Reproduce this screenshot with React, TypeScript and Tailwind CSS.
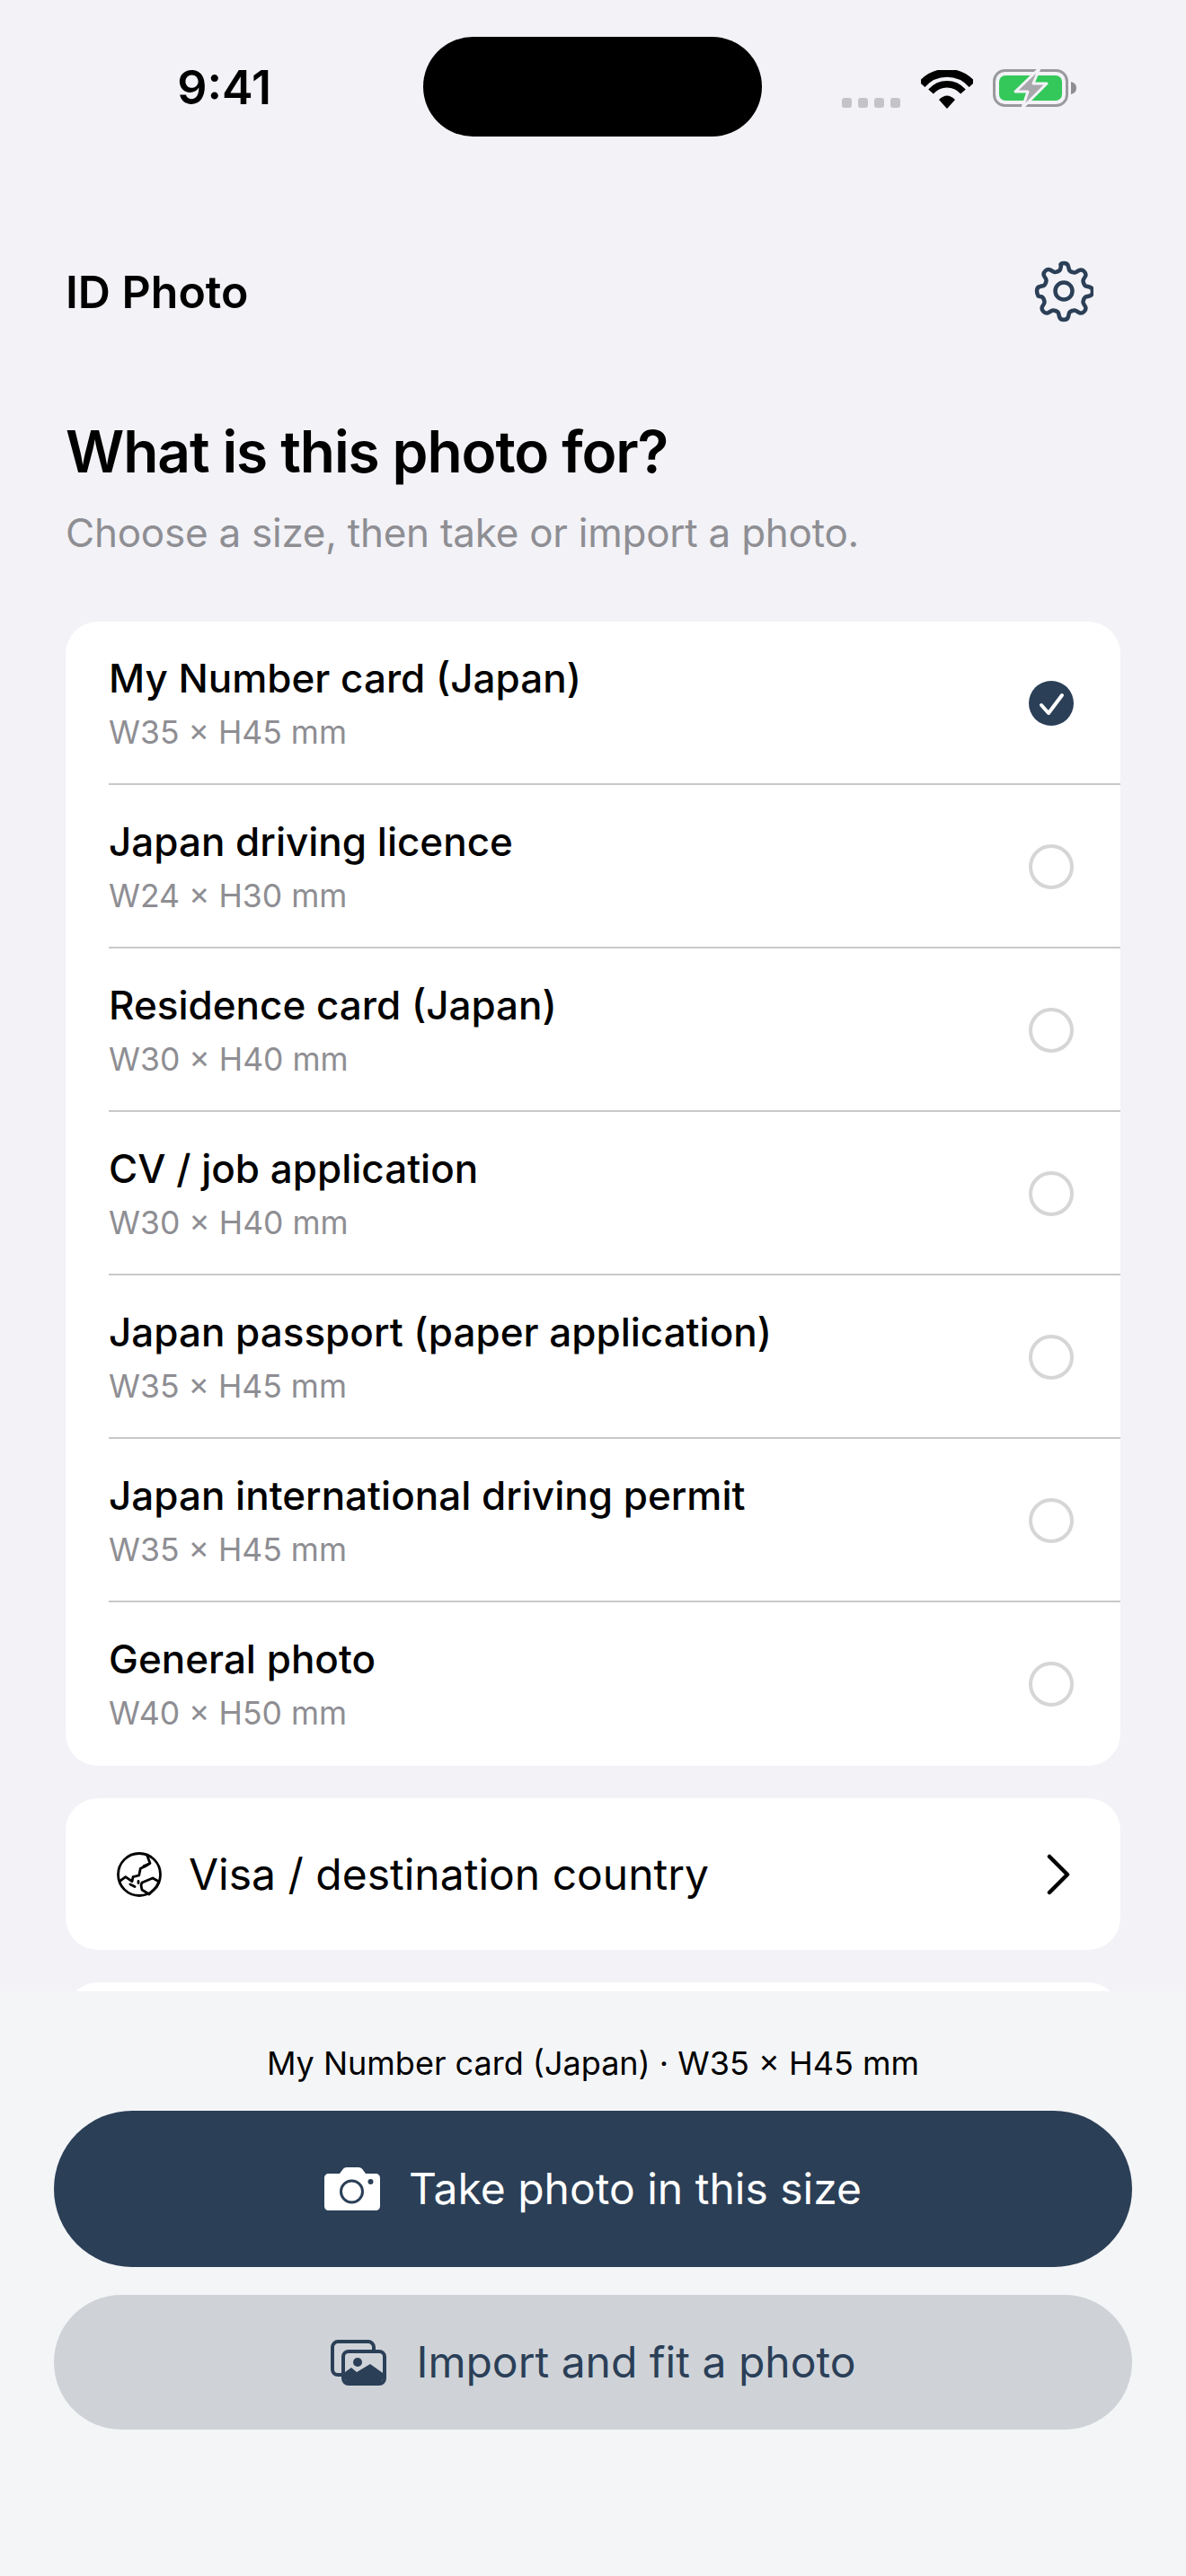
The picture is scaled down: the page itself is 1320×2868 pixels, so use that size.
const sizes = [
  { name: 'My Number card (Japan)', size: 'W35 × H45 mm', on: true },
  { name: 'Japan driving licence', size: 'W24 × H30 mm' },
  { name: 'Residence card (Japan)', size: 'W30 × H40 mm' },
  { name: 'CV / job application', size: 'W30 × H40 mm' },
  { name: 'Japan passport (paper application)', size: 'W35 × H45 mm' },
  { name: 'Japan international driving permit', size: 'W35 × H45 mm' },
  { name: 'General photo', size: 'W40 × H50 mm' },
]

function StatusIcons() {
  return (
    <div className="flex items-end">
      <div className="mb-[1px] flex gap-[7px]">
        <span className="h-[11px] w-[11px] rounded-[3px] bg-[#c4c4c8]" />
        <span className="h-[11px] w-[11px] rounded-[3px] bg-[#c4c4c8]" />
        <span className="h-[11px] w-[11px] rounded-[3px] bg-[#c4c4c8]" />
        <span className="h-[11px] w-[11px] rounded-[3px] bg-[#c4c4c8]" />
      </div>
      <svg className="ml-[23px]" width="58" height="43" viewBox="0 0 58 43" fill="none">
        <path d="M1 14C16-3 42-3 57 14" stroke="#000" strokeWidth="9" transform="translate(0 2)" />
        <path d="M11 24c10-11 26-11 36 0" stroke="#000" strokeWidth="7.5" />
        <path d="M20 33c6-6 12-6 18 0L29 43z" fill="#000" />
      </svg>
      <svg className="ml-[22px]" width="94" height="46" viewBox="0 0 94 46" fill="none">
        <rect x="1.500" y="3.500" width="81" height="39" rx="12" stroke="#9a9a9e" strokeWidth="3" />
        <rect x="7" y="9" width="70" height="28" rx="7" fill="#34c85a" />
        <path d="M87 16c4 1 6 3.500 6 7s-2 6-6 7z" fill="#8e8e92" />
        <path d="M52 1 25 27h14l-6 18 27-27H45z" fill="#a8a8ac" stroke="#f2f2f7" strokeWidth="3" strokeLinejoin="round" />
      </svg>
    </div>
  )
}

function Gear() {
  const d = 'M31 5c2.500 0 4.500 1 5 3.500l1 4c.5 1.500 2 2 3.500 2.500 1.500.5 2.500 1 4 0l3.500-2c2-1 4-.5 5.500 1 1.500 1.500 2.500 3.500 1.500 5.500l-2 3.500c-1 1.500-.5 2.500 0 4s1 3 2.500 3.500l4 1c2.500.5 3.500 2.500 3.500 5s-1 4.500-3.500 5l-4 1c-1.500.5-2 2-2.500 3.500s-1 2.500 0 4l2 3.500c1 2 0 4-1.500 5.500s-3.500 2-5.500 1l-3.500-2c-1.500-1-2.500-.5-4 0s-3 1-3.500 2.500l-1 4c-.5 2.500-2.500 3.500-5 3.500s-4.500-1-5-3.500l-1-4c-.5-1.500-2-2-3.500-2.500s-2.500-1-4 0l-3.500 2c-2 1-4 .5-5.500-1s-2.500-3.500-1.500-5.500l2-3.500c1-1.500.5-2.500 0-4s-1-3-2.500-3.500l-4-1C2 40.500 1 38.500 1 36s1-4.500 3.500-5l4-1c1.500-.5 2-2 2.500-3.500s1-2.500 0-4l-2-3.500c-1-2 0-4 1.500-5.500s3.500-2 5.500-1l3.500 2c1.500 1 2.500.5 4 0s3-1 3.500-2.500l1-4C26.500 6 28.500 5 31 5z'
  return (
    <svg width="66" height="72" viewBox="0 0 62 72" fill="none" className="-translate-y-[1px]">
      <path d={d} stroke="#2b3f57" strokeWidth="4.500" strokeLinejoin="round" />
      <circle cx="31" cy="36" r="9.500" stroke="#2b3f57" strokeWidth="4.500" />
    </svg>
  )
}

// globe with Asia and Australia, no matching icon in the packages
function Globe() {
  return (
    <svg width="50" height="50" viewBox="0 0 50 50" fill="none" stroke="#000" strokeWidth="2.800" strokeLinecap="round" strokeLinejoin="round" className="shrink-0">
      <circle cx="25" cy="25" r="23.500" />
      <path d="M33.700 3.500 37 12.500l-5.700 3.500-5 2.300-1.600 7.700-6.700 1.700-1 5-7.300-5-6 4.500" />
      <path d="M30 15.500l5-2" />
      <path d="M15 36l5 2.500" />
      <path d="M24 32.500v2" />
      <path d="M28 34l12-5 7 4-3 6-8 8-8-5-1-5z" />
    </svg>
  )
}

function Camera() {
  return (
    <svg width="62" height="48" viewBox="0 0 62 48" className="shrink-0">
      <path d="M5 7h12l3-4c1-2 3-3 5-3h13c2 0 4 1 5 3l3 4h11c3 0 5 2 5 5v31c0 3-2 5-5 5H5c-3 0-5-2-5-5V12c0-3 2-5 5-5z" fill="#fff" />
      <circle cx="30.500" cy="27" r="12" fill="none" stroke="#2b3f57" strokeWidth="3" />
      <circle cx="51.500" cy="16" r="3" fill="#2b3f57" />
    </svg>
  )
}

function Photos() {
  return (
    <svg width="62" height="51" viewBox="0 0 62 51" fill="none" className="shrink-0">
      <path d="M12 39H8c-3 0-6-2-6-6V8c0-3 3-6 6-6h34c3 0 6 3 6 6v4" stroke="#2b3f57" strokeWidth="4" />
      <rect x="14" y="13" width="46" height="36" rx="6" stroke="#2b3f57" strokeWidth="4" />
      <circle cx="30" cy="25" r="5" fill="#2b3f57" />
      <path d="M16 36l7-5 6 5 15-9 14 10v6c0 3-2 5-5 5H21c-3 0-5-2-5-5z" fill="#2b3f57" />
    </svg>
  )
}

export default function App() {
  return (
    <div className="relative h-[2868px] w-[1320px] overflow-hidden bg-[#f2f2f7] font-['Inter',sans-serif] text-black">
      <div className="flex h-[193px] items-start">
        <div className="w-[471px] pt-[68px] pr-[169px] text-right text-[52px] leading-[60px] font-semibold">9:41</div>
        <div className="mt-[41px] h-[111px] w-[377px] rounded-full bg-black" />
        <div className="mt-[75px] ml-[89px]"><StatusIcons /></div>
      </div>

      <div className="mt-[100px] flex h-[64px] items-center justify-between pr-[103px] pl-[73px]">
        <div className="text-[50px] font-semibold">ID Photo</div>
        <Gear />
      </div>

      <h1 className="mt-[106px] px-[73px] text-[64px] leading-[80px] font-semibold tracking-[-1.1px]">What is this photo for?</h1>
      <p className="mt-[23px] px-[73px] text-[44px] leading-[54px] tracking-[-0.25px] text-[#8e8e93]">Choose a size, then take or import a photo.</p>

      <div className="mx-[73px] mt-[72px] overflow-hidden rounded-[36px] bg-white">
        {sizes.map((s, i) => (
          <div key={s.name} className="relative flex h-[182px] items-center justify-between pl-[48px]">
            <div>
              <div className="text-[44px] leading-[54px] font-medium">{s.name}</div>
              <div className="mt-[11px] text-[35.500px] leading-[46px] text-[#8e8e93]">{s.size}</div>
            </div>
            <div className="mr-[52px]">
              {s.on ? (
                <span className="block h-[50px] w-[50px] rounded-full bg-[#2b3f57]">
                  <svg width="50" height="50" viewBox="0 0 50 50" fill="none"><path d="M14 27l8 9 15-20" stroke="#fff" strokeWidth="4" strokeLinecap="round" strokeLinejoin="round" /></svg>
                </span>
              ) : (
                <span className="block h-[50px] w-[50px] rounded-full border-[4px] border-[#d6d6d6]" />
              )}
            </div>
            {i < sizes.length - 1 && <div className="absolute right-0 bottom-0 left-[48px] h-[2px] bg-[#c9c9cb]" />}
          </div>
        ))}
      </div>

      <div className="mx-[73px] mt-[36px] flex h-[169px] items-center rounded-[36px] bg-white pr-[52px] pl-[57px]">
        <Globe />
        <span className="ml-[30px] flex-1 text-[48px]">Visa / destination country</span>
        <svg width="32" height="46" viewBox="0 0 32 46" fill="none"><path d="M5 3l20 20L5 43" stroke="#000" strokeWidth="4.500" strokeLinecap="round" strokeLinejoin="round" /></svg>
      </div>

      <div className="mx-[73px] mt-[36px] h-[100px] rounded-[36px] bg-white" />

      {/* sticky bottom action area */}
      <div className="absolute inset-x-0 top-[2217px] bottom-0 bg-[#f4f5f7]">
        <div className="pt-[57px] text-center text-[36px] leading-[46px]">My Number card (Japan) · W35 × H45 mm</div>
        <div className="mx-[60px] mt-[30px] flex h-[174px] items-center justify-center gap-[32px] rounded-full bg-[#2b3f57] text-[48px] text-white">
          <Camera />
          <span>Take photo in this size</span>
        </div>
        <div className="mx-[60px] mt-[31px] flex h-[150px] items-center justify-center gap-[34px] rounded-full bg-[#cfd3d8] text-[48px] text-[#2b3f57]">
          <Photos />
          <span>Import and fit a photo</span>
        </div>
      </div>
    </div>
  )
}
